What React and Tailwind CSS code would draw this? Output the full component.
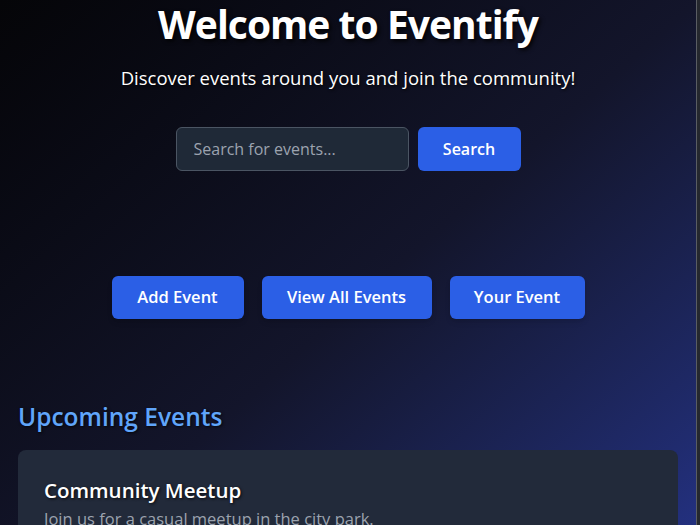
import React from "react";

const font = { fontFamily: '"Open Sans", "Noto Sans", sans-serif' };

const App = () => {
	return (
		<div
			className="flex min-h-screen bg-gradient-to-br from-[#050508] via-[#13152b] to-[#26358f] text-white"
			style={font}
		>
			<main className="flex-1">
				{/* hero */}
				<section className="flex flex-col items-center text-center">
					<h1 className="text-[39px] leading-[48px] font-bold tracking-tight [text-shadow:2px_2px_4px_rgba(0,0,0,0.9)]">
						Welcome to Eventify
					</h1>
					<p className="mt-[16px] text-[18.5px] [text-shadow:1px_1px_3px_rgba(0,0,0,0.9)]">
						Discover events around you and join the community!
					</p>
					{/* search */}
					<div className="mt-[35px] flex gap-[9px]">
						<input
							type="text"
							placeholder="Search for events..."
							className="w-[233px] h-[44px] px-[17px] rounded-md border border-[#4b5563] bg-[#1f2937] text-[16px] text-white placeholder:text-[#9ca3af] outline-none"
						/>
						<button className="w-[103px] h-[44px] rounded-md bg-[#2b5fe6] text-[16px] font-semibold">
							Search
						</button>
					</div>
					{/* actions */}
					<div className="mt-[105px] flex gap-[18px]">
						<button className="w-[132px] h-[43px] rounded-md bg-[#2b5fe6] text-[16.5px] font-semibold shadow-md">
							Add Event
						</button>
						<button className="w-[170px] h-[43px] rounded-md bg-[#2b5fe6] text-[16.5px] font-semibold shadow-md">
							View All Events
						</button>
						<button className="w-[135px] h-[43px] rounded-md bg-[#2b5fe6] text-[16.5px] font-semibold shadow-md">
							Your Event
						</button>
					</div>
				</section>

				{/* upcoming events */}
				<section className="px-[18px] mt-[80px] pb-8">
					<h2 className="text-[24.5px] font-semibold text-[#60a5fa] [text-shadow:1px_1px_3px_rgba(0,0,0,0.8)]">
						Upcoming Events
					</h2>
					<div className="mt-[14px] rounded-lg bg-[#222a3a] px-[26px] pt-[25px] pb-6">
						<h3 className="text-[20.5px] font-semibold [text-shadow:1px_1px_3px_rgba(0,0,0,0.8)]">
							Community Meetup
						</h3>
						<p className="mt-[2px] text-[16.5px] text-[#9ca3af]">
							Join us for a casual meetup in the city park.
						</p>
						<p className="mt-2 text-[14px] text-[#9ca3af]">Date: 2024-07-15</p>
					</div>
				</section>
			</main>
			{/* scrollbar strip */}
			<div className="w-[4px] shrink-0 border-l border-[#5a5d63] bg-[#25282e]" />
		</div>
	);
};

export default App;
